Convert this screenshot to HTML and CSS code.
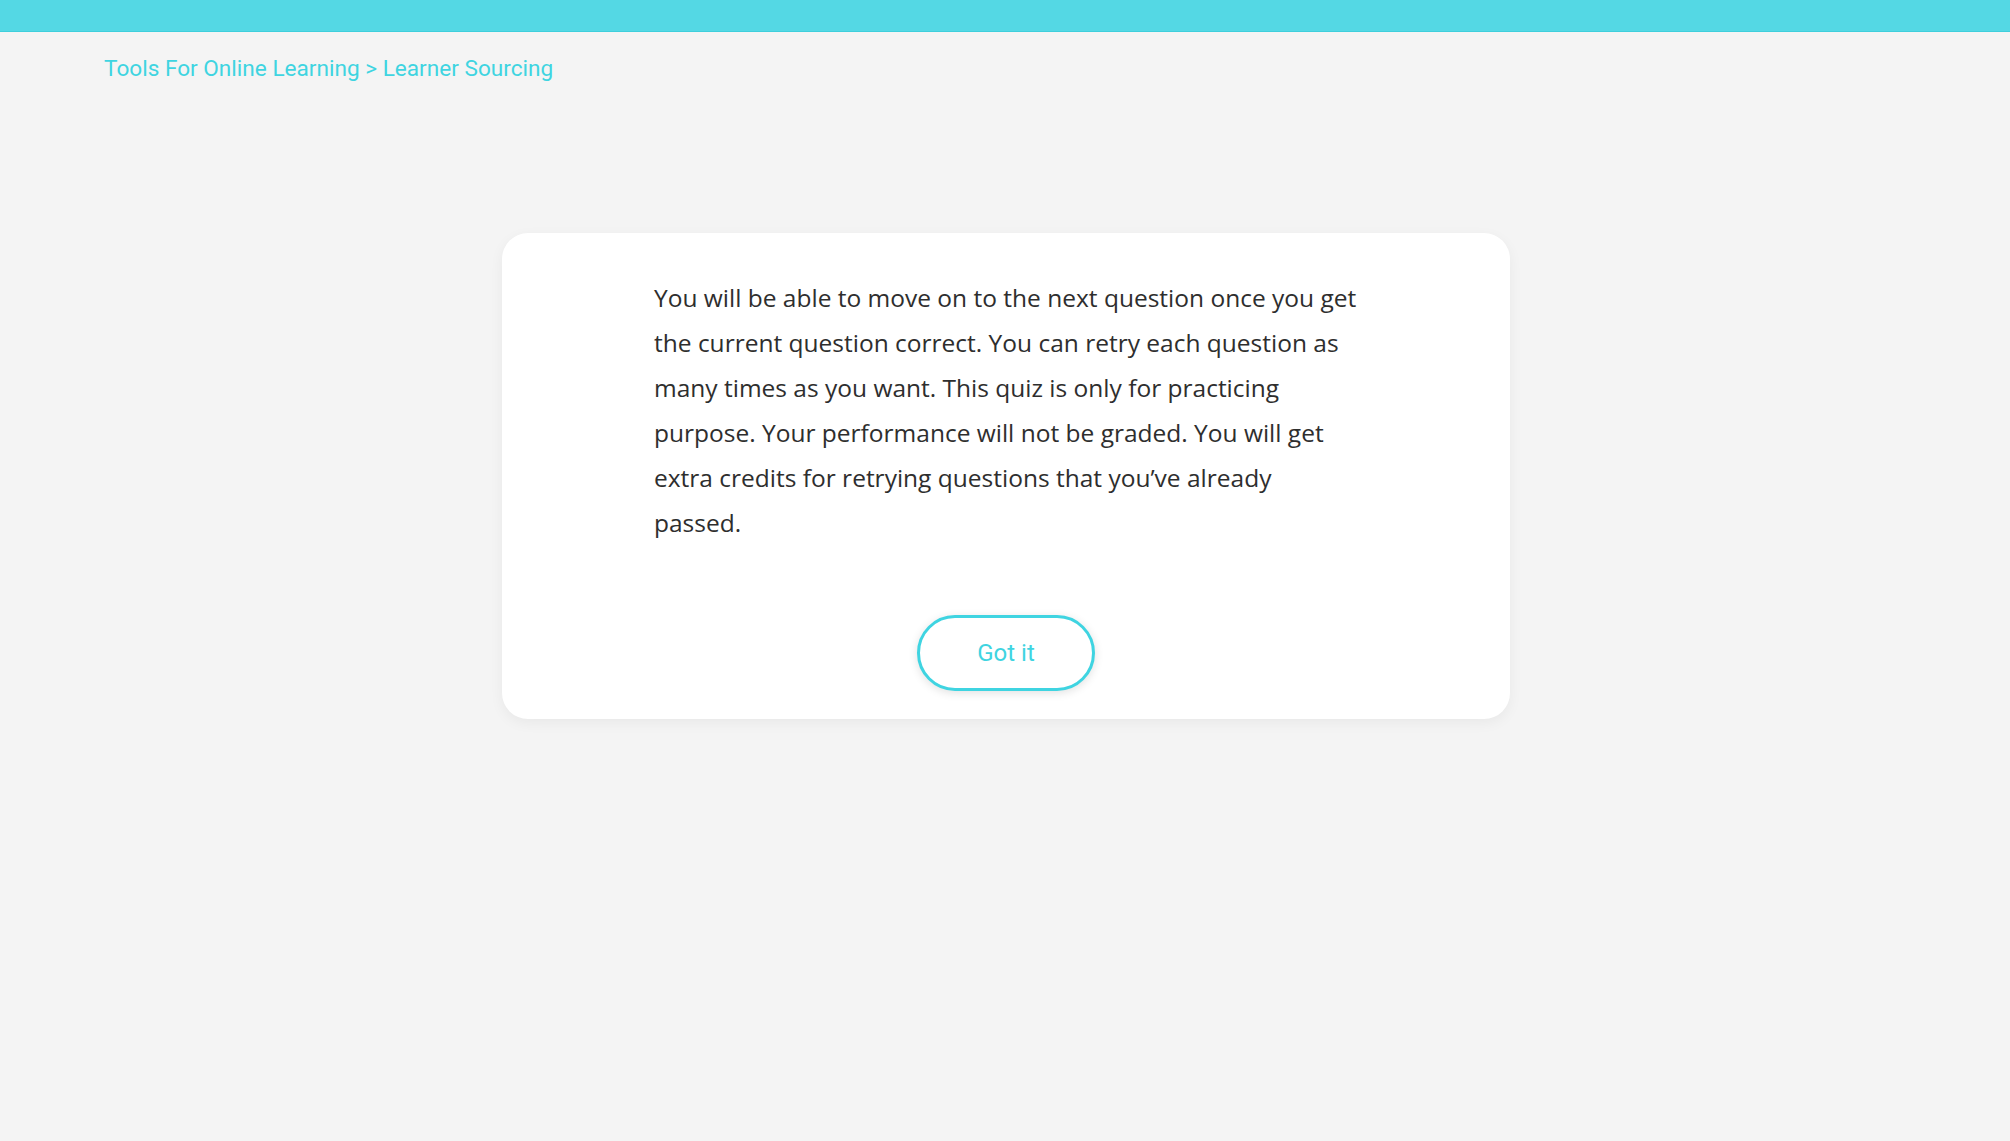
FILE: index.html
```html
<!DOCTYPE html>
<html>
<head>
<meta charset="utf-8">
<link rel="stylesheet" href="styles.css">
</head>
<body>
<header class="topbar"></header>
<nav class="crumbs">Tools For Online Learning &gt; Learner Sourcing</nav>
<main class="stage">
  <section class="card">
    <p class="message">You will be able to move on to the next question once you get the current question correct. You can retry each question as many times as you want. This quiz is only for practicing purpose. Your performance will not be graded. You will get extra credits for retrying questions that you’ve already passed.</p>
    <div class="actions"><button class="btn">Got it</button></div>
  </section>
</main>
</body>
</html>
```
FILE: styles.css
```css
html, body {
  margin: 0;
  padding: 0;
  background: #f4f4f4;
  height: 100%;
}
body {
  font-family: Roboto, "Liberation Sans", sans-serif;
}
.topbar {
  height: 31px;
  background: #54d8e4;
  border-bottom: 1px solid #3fcfdc;
}
.crumbs {
  padding: 15px 0 0 104px;
  height: 42px;
  font-size: 22.6px;
  line-height: 44px;
  color: #3fd4e1;
}
.stage {
  display: flex;
  justify-content: center;
  padding-top: 144px;
  padding-left: 2px;
}
.card {
  width: 1008px;
  box-sizing: border-box;
  background: #fff;
  border-radius: 26px;
  box-shadow: 0 4px 14px rgba(0,0,0,0.05);
  padding: 42px 0 28px;
  display: flex;
  flex-direction: column;
}
.message {
  margin: 0;
  padding: 0 148px 0 152px;
  font-family: "Open Sans", "Noto Sans", sans-serif;
  font-size: 24.5px;
  line-height: 45px;
  color: #2e2e2e;
}
.actions {
  padding-top: 70px;
  display: flex;
  justify-content: center;
}
.btn {
  width: 178px;
  height: 76px;
  border: 3px solid #3fd4e1;
  border-radius: 38px;
  background: #fff;
  color: #3fd4e1;
  font-family: Roboto, "Liberation Sans", sans-serif;
  font-size: 24px;
  box-shadow: 0 2px 10px rgba(0,0,0,0.12);
  cursor: pointer;
}
```
